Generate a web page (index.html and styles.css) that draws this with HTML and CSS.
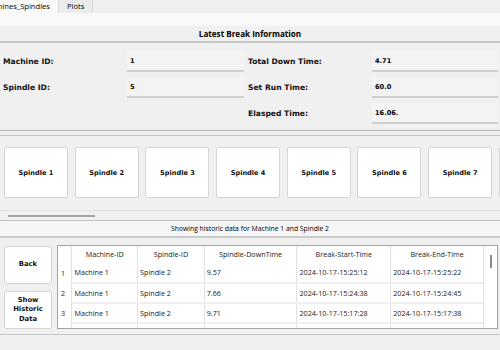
FILE: index.html
```html
<!DOCTYPE html>
<html lang="en">
<head>
  <meta charset="UTF-8">
  <title>Machine Breaks</title>
  <link rel="stylesheet" href="styles.css">
</head>
<body>
<div class="tabs">
  <div class="tab active"><span class="tab-text">Machines_Spindles</span></div>
  <div class="tab">Plots</div>
</div>
<div class="pane">
  <div class="pane-top"></div>
  <div class="title">Latest Break Information</div>

  <div class="info">
    <div class="label">Machine ID:</div>
    <div class="field">1</div>
    <div class="label">Total Down Time:</div>
    <div class="field">4.71</div>

    <div class="label">Spindle ID:</div>
    <div class="field">5</div>
    <div class="label">Set Run Time:</div>
    <div class="field">60.0</div>

    <div class="label"></div>
    <div class="blank"></div>
    <div class="label">Elasped Time:</div>
    <div class="field">16.06.</div>
  </div>

  <div class="strip">
    <div class="spindles" id="spindles"></div>
    <div class="hscroll"><div class="hthumb"></div></div>
  </div>

  <div class="status">Showing historic data for Machine 1 and Spindle 2</div>

  <div class="bottom">
    <div class="actions">
      <button class="btn">Back</button>
      <button class="btn">Show<br>Historic<br>Data</button>
    </div>
    <div class="grid-wrap">
      <div class="grid-clip">
        <table class="grid">
          <thead>
            <tr>
              <th class="num-col"></th>
              <th class="c-mach">Machine-ID</th>
              <th class="c-spin">Spindle-ID</th>
              <th class="c-down">Spindle-DownTime</th>
              <th class="c-start">Break-Start-Time</th>
              <th class="c-end">Break-End-Time</th>
            </tr>
          </thead>
          <tbody id="rows"></tbody>
        </table>
      </div>
      <div class="vscroll"><div class="vthumb"></div></div>
    </div>
  </div>
</div>
<script>
const SPINDLES = 8;
const col = document.getElementById('spindles');
for (let i = 1; i <= SPINDLES; i++) {
  const b = document.createElement('button');
  b.className = 'spindle-btn';
  b.innerText = 'Spindle ' + i;
  col.appendChild(b);
}

const HISTORY = [
  ["Machine 1", "Spindle 2", "9.57", "2024-10-17-15:25:12", "2024-10-17-15:25:22"],
  ["Machine 1", "Spindle 2", "7.66", "2024-10-17-15:24:38", "2024-10-17-15:24:45"],
  ["Machine 1", "Spindle 2", "9.71", "2024-10-17-15:17:28", "2024-10-17-15:17:38"],
  ["Machine 1", "Spindle 2", "8.1564236758033", "2024-10-17-15:14:27", "2024-10-17-15:14:34"]
];
let rows = '';
HISTORY.forEach((r, i) => {
  rows += `<tr>
    <td class="num-col">${i + 1}</td>
    ${r.map(v => `<td>${v}</td>`).join('')}
  </tr>`;
});
document.getElementById('rows').innerHTML = rows;
</script>
</body>
</html>
```

FILE: styles.css
```css
html, body {
  margin: 0;
  padding: 0;
  background: #f0f0f0;
  color: #000;
  font-family: "Open Sans", "Noto Sans", sans-serif;
  width: 500px;
  height: 350px;
  overflow: hidden;
}
button { font-family: inherit; }

/* tabs */
.tabs {
  display: flex;
  height: 13px;
  background: #f0f0f0;
}
.tab {
  font-size: 7.6px;
  line-height: 13px;
  padding: 0 8px;
  background: #ececec;
  border-left: 1px solid #dadada;
  border-right: 1px solid #dadada;
}
.tab.active {
  background: #f9f9f9;
  border: none;
  width: 50px;
  padding: 0 4px 0 4px;
  overflow: hidden;
}
.tab-text {
  display: block;
  margin-left: -21px;
  white-space: nowrap;
}

/* top pane */
.pane-top {
  height: 13px;
  background: #f9f9f9;
}
.title {
  height: 15px;
  line-height: 15px;
  text-align: center;
  font-weight: 700;
  font-size: 8.1px;
  border-bottom: 2px solid #c6c6c6;
}

.info {
  display: grid;
  grid-template-columns: 120px 117px 120px 126px;
  column-gap: 4px;
  row-gap: 5px;
  grid-auto-rows: 21px;
  padding: 8px 2px 6px 3px;
  border-bottom: 1px solid #b4b4b4;
}
.label, .field, .spindle-btn, .btn {
  font-family: "DejaVu Sans", Verdana, sans-serif;
  font-weight: 700;
}
.label {
  font-size: 7.6px;
  line-height: 21px;
  color: #111;
}
.field {
  font-size: 6.6px;
  line-height: 21px;
  padding-left: 3px;
  background: #f3f3f3;
  border-bottom: 2px solid #cfcfcf;
  box-sizing: border-box;
}

/* spindle strip */
.strip {
  margin-top: 4px;
  border-top: 1px solid #c4c4c4;
}
.spindles {
  display: flex;
  gap: 6.7px;
  padding: 11px 0 12px 4px;
  overflow: hidden;
  border-bottom: 1px solid #e2e2e2;
}
.spindle-btn {
  flex: 0 0 64px;
  height: 51px;
  background: #fff;
  border: 1px solid #d4d4d4;
  border-radius: 2px;
  font-size: 6.6px;
  color: #111;
  padding: 0;
}
.hscroll {
  height: 10px;
  padding-top: 4px;
  box-sizing: border-box;
  border-bottom: 1px solid #c2c2c2;
}
.hthumb {
  width: 87px;
  height: 2px;
  margin-left: 8px;
  background: #a5a5a5;
}

.status {
  height: 15px;
  line-height: 16px;
  text-align: center;
  font-size: 6.8px;
  background: #f5f5f5;
  border-bottom: 2px solid #cbcbcb;
}

/* history */
.bottom {
  display: flex;
  gap: 5px;
  padding: 7px 2px 0 4px;
  height: 97px;
  box-sizing: border-box;
  border-bottom: 1px solid #c6c6c6;
}
.actions {
  display: flex;
  flex-direction: column;
  gap: 7px;
  padding-top: 1px;
}
.btn {
  flex: 0 0 auto;
  width: 48px;
  height: 38px;
  background: #fff;
  border: 1px solid #d4d4d4;
  border-radius: 2px;
  font-size: 6.8px;
  line-height: 9.4px;
  color: #111;
  padding: 0;
}
.grid-wrap {
  flex: 1;
  display: flex;
  height: 84px;
  border: 1px solid #a4a4a4;
  background: #fff;
  box-sizing: border-box;
}
.grid-clip {
  flex: 1;
  overflow: hidden;
}
.grid {
  border-collapse: collapse;
  table-layout: fixed;
  font-size: 7.2px;
}
.grid th {
  font-weight: 400;
  height: 16px;
  padding: 0;
  text-align: center;
  border-left: 1px solid #e2e2e2;
  color: #222;
}
.grid td {
  height: 18px;
  padding: 0 0 0 2px;
  border-left: 1px solid #e2e2e2;
  border-top: 2px solid #efefef;
  white-space: nowrap;
  overflow: hidden;
  color: #222;
}
.grid tr:first-child td { border-top: none; height: 20px; }
.grid th.num-col, .grid td.num-col {
  width: 14px;
  border-left: none;
  border-top: none;
  padding-left: 3px;
  box-sizing: border-box;
}
.c-mach { width: 65px; }
.c-spin { width: 66px; }
.c-down { width: 92px; }
.c-start { width: 93px; }
.c-end { width: 92px; }
.vscroll {
  width: 13px;
  border-left: 1px solid #e2e2e2;
}
.vthumb {
  width: 2px;
  height: 13px;
  background: #8a8a8a;
  margin: 9px 0 0 6px;
}
```
